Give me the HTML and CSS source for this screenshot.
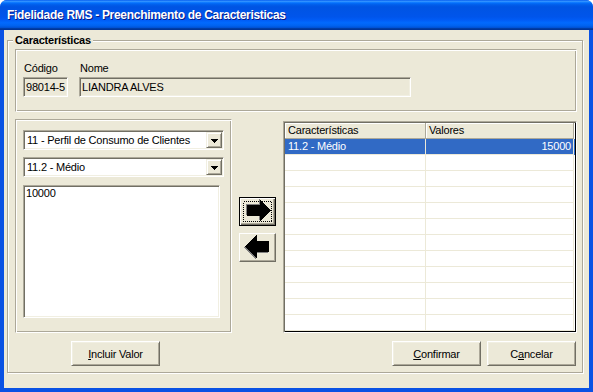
FILE: index.html
```html
<!DOCTYPE html>
<html lang="pt-BR">
<head>
<meta charset="UTF-8" />
<title>Fidelidade RMS - Preenchimento de Caracteristicas</title>
<link rel="stylesheet" href="styles.css">
</head>
<body>
  <div class="window">
    <div class="titlebar">Fidelidade RMS - Preenchimento de Caracteristicas</div>

    <div class="client">
      <fieldset class="group">
        <legend>Características</legend>

        <div class="panel top-panel">
          <div class="field">
            <label>Código</label>
            <div class="edit codigo">98014-5</div>
          </div>
          <div class="field">
            <label>Nome</label>
            <div class="edit nome">LIANDRA ALVES</div>
          </div>
        </div>

        <div class="middle">
          <div class="panel left-panel">
            <div class="combo">
              <span class="combo-text">11 - Perfil de Consumo de Clientes</span>
              <span class="combo-btn">
                <svg width="7" height="4" viewBox="0 0 7 4"><path d="M0 0h7v1H0zM1 1h5v1H1zM2 2h3v1H2zM3 3h1v1H3z" fill="#000"/></svg>
              </span>
            </div>
            <div class="combo">
              <span class="combo-text">11.2 - Médio</span>
              <span class="combo-btn">
                <svg width="7" height="4" viewBox="0 0 7 4"><path d="M0 0h7v1H0zM1 1h5v1H1zM2 2h3v1H2zM3 3h1v1H3z" fill="#000"/></svg>
              </span>
            </div>
            <div class="memo">10000</div>
          </div>

          <div class="arrows">
            <button class="arrow-btn default">
              <svg width="35" height="27" viewBox="0 0 35 27" shape-rendering="crispEdges">
                <rect x="3.5" y="3.5" width="28" height="20" fill="none" stroke="#000" stroke-dasharray="1 1"/>
                <polygon points="6,6 19,6 19,1 29.5,11.5 19,22 19,17 6,17" fill="#808080"/>
                <polygon points="7,7 20,7 20,2 30.5,12.5 20,23 20,18 7,18" fill="#000"/>
              </svg>
            </button>
            <button class="arrow-btn">
              <svg width="35" height="27" viewBox="0 0 35 27" shape-rendering="crispEdges">
                <polygon points="28,8 16,8 16,2 4,13.5 16,25 16,19 28,19" fill="#808080"/>
                <polygon points="29,7 17,7 17,1 5,12.5 17,24 17,18 29,18" fill="#000"/>
              </svg>
            </button>
          </div>

          <div class="grid">
            <div class="grid-row grid-head">
              <div class="cell">Características</div>
              <div class="cell">Valores</div>
            </div>
            <div class="grid-row selected">
              <div class="cell">11.2 - Médio</div>
              <div class="cell num">15000</div>
            </div>
            <div class="grid-row"><div class="cell"></div><div class="cell"></div></div>
            <div class="grid-row"><div class="cell"></div><div class="cell"></div></div>
            <div class="grid-row"><div class="cell"></div><div class="cell"></div></div>
            <div class="grid-row"><div class="cell"></div><div class="cell"></div></div>
            <div class="grid-row"><div class="cell"></div><div class="cell"></div></div>
            <div class="grid-row"><div class="cell"></div><div class="cell"></div></div>
            <div class="grid-row"><div class="cell"></div><div class="cell"></div></div>
            <div class="grid-row"><div class="cell"></div><div class="cell"></div></div>
            <div class="grid-row"><div class="cell"></div><div class="cell"></div></div>
            <div class="grid-row"><div class="cell"></div><div class="cell"></div></div>
            <div class="grid-row"><div class="cell"></div><div class="cell"></div></div>
          </div>
        </div>

        <div class="actions">
          <button class="btn incluir"><u>I</u>ncluir Valor</button>
          <div class="actions-right">
            <button class="btn"><u>C</u>onfirmar</button>
            <button class="btn">C<u>a</u>ncelar</button>
          </div>
        </div>
      </fieldset>
    </div>
  </div>
</body>
</html>
```

FILE: styles.css
```css
* {
  box-sizing: border-box;
}
body {
  margin: 0;
  background: #ffffff;
  font-family: 'Liberation Sans', Arial, sans-serif;
  font-size: 11px;
  letter-spacing: -0.2px;
  color: #000;
}
.window {
  width: 593px;
  height: 392px;
  display: flex;
  flex-direction: column;
  background: #0a52e4;
  border-radius: 7px 7px 0 0;
  overflow: hidden;
}
.titlebar {
  height: 30px;
  flex: none;
  padding: 1px 7px 0;
  line-height: 29px;
  color: #fff;
  font-weight: bold;
  font-size: 12px;
  letter-spacing: -0.3px;
  text-shadow: 1px 1px #0a1883;
  background: linear-gradient(to bottom, #0058ee 0%, #3593ff 4%, #288eff 6%, #127dff 8%, #036ffc 10%, #0262ee 14%, #0057e5 20%, #0054e3 24%, #0055eb 56%, #005bf5 66%, #026afe 76%, #0062ef 86%, #0052d6 92%, #0040ab 94%, #003092 100%);
}
.client {
  flex: 1;
  margin: 0 4px 4px;
  background: #ece9d8;
  padding: 4px 6px 0 3px;
}

/* group box */
.group {
  margin: 0;
  min-width: 0;
  padding: 2px 5px 6px 7px;
  border: 1px solid #aca899;
  box-shadow: inset 1px 1px #fff, 1px 1px #fff;
}
.group legend {
  font-weight: bold;
  line-height: 13px;
  padding: 0 2px;
  margin-left: -2px;
  background: #ece9d8;
}

.panel {
  border: 1px solid;
  border-color: #aca899 #fff #fff #aca899;
  box-shadow: inset 1px 1px #fff, inset -1px -1px #aca899;
}
.top-panel {
  height: 63px;
  display: flex;
  gap: 11px;
  padding: 12px 0 0 7px;
}
.field label {
  display: block;
  line-height: 13px;
  padding-left: 1px;
}
.edit {
  margin-top: 2px;
  height: 20px;
  padding-left: 2px;
  line-height: 18px;
  white-space: nowrap;
  overflow: hidden;
  border: 1px solid;
  border-color: #aca899 #fff #fff #aca899;
  box-shadow: inset 1px 1px #716f64, inset -1px -1px #f1efe2;
}
.edit.codigo {
  width: 45px;
}
.edit.nome {
  width: 332px;
}

.middle {
  display: flex;
  margin-top: 7px;
  height: 214px;
}
.left-panel {
  width: 217px;
  padding: 10px 0 0 7px;
  display: flex;
  flex-direction: column;
  gap: 7px;
}
.combo {
  width: 201px;
  height: 20px;
  padding: 1px;
  display: flex;
  background: #fff;
  border: 1px solid;
  border-color: #aca899 #fff #fff #aca899;
  box-shadow: inset 1px 1px #716f64, inset -1px -1px #f1efe2;
}
.combo-text {
  flex: 1;
  padding-left: 2px;
  line-height: 16px;
  white-space: nowrap;
  overflow: hidden;
}
.combo-btn {
  width: 16px;
  height: 16px;
  display: flex;
  align-items: center;
  justify-content: center;
  padding-top: 1px;
  background: #ece9d8;
  border: 1px solid;
  border-color: #f1efe2 #716f64 #716f64 #f1efe2;
  box-shadow: inset 1px 1px #fff, inset -1px -1px #aca899;
}
.combo-btn svg {
  display: block;
}
.memo {
  width: 197px;
  height: 133px;
  margin-top: 1px;
  padding: 1px 2px;
  line-height: 13px;
  background: #fff;
  border: 1px solid;
  border-color: #aca899 #fff #fff #aca899;
  box-shadow: inset 1px 1px #716f64, inset -1px -1px #f1efe2;
}

/* arrow buttons */
.arrows {
  display: flex;
  flex-direction: column;
  gap: 7px;
  margin-left: 7px;
  padding-top: 78px;
}
.arrow-btn {
  width: 37px;
  height: 29px;
  padding: 0;
  background: #ece9d8;
  border: 1px solid;
  border-color: #fff #716f64 #716f64 #fff;
  box-shadow: inset -1px -1px #aca899;
  display: flex;
  align-items: center;
  justify-content: center;
}
.arrow-btn.default {
  border-color: #000;
  box-shadow: inset 1px 1px #fff, inset -1px -1px #716f64, inset -2px -2px #aca899;
}
.arrow-btn svg {
  display: block;
}

/* grid */
.grid {
  width: 294px;
  height: 212px;
  margin: 2px 0 0 7px;
  background: #fff;
  overflow: hidden;
  border: 1px solid;
  border-color: #aca899 #fff #fff #aca899;
  box-shadow: inset 1px 1px #716f64, inset -1px -1px #000;
  padding: 1px;
}
.grid-row {
  display: grid;
  grid-template-columns: 141px 148px;
  height: 16px;
}
.cell {
  line-height: 15px;
  padding: 0 2px 0 3px;
  white-space: nowrap;
  overflow: hidden;
  border-right: 1px solid #ece9d8;
  border-bottom: 1px solid #ece9d8;
}
.grid-head .cell {
  background: #ece9d8;
  border-color: #aca899;
  box-shadow: inset 1px 1px #fff;
}
.grid-row.selected {
  background: #316ac5;
  color: #fff;
}
.cell.num {
  text-align: right;
}

/* bottom buttons */
.actions {
  display: flex;
  margin-top: 8px;
  height: 25px;
}
.actions-right {
  display: flex;
  gap: 6px;
  margin-left: auto;
  margin-right: 1px;
}
.btn {
  width: 89px;
  height: 25px;
  padding: 0;
  font-family: inherit;
  font-size: 11px;
  letter-spacing: -0.2px;
  color: #000;
  background: #ece9d8;
  border: 1px solid;
  border-color: #fff #716f64 #716f64 #fff;
  box-shadow: inset 1px 1px #f1efe2, inset -1px -1px #aca899;
}
.btn.incluir {
  margin-left: 56px;
}
```
